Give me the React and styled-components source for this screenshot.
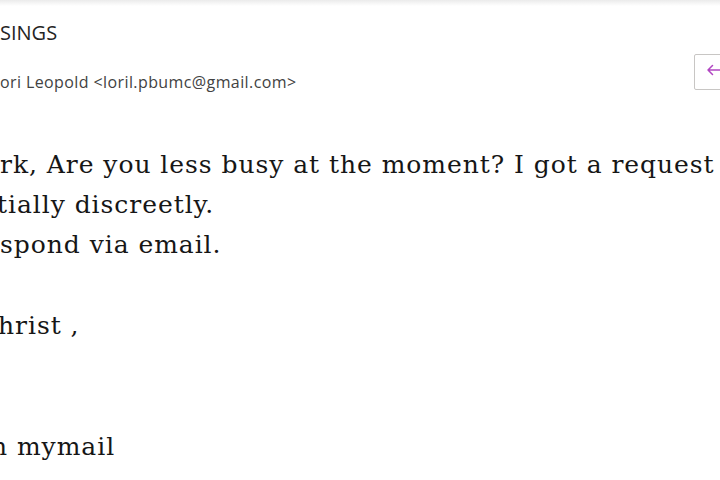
import React from "react";
import styled, { createGlobalStyle } from "styled-components";

const Global = createGlobalStyle`
  html, body { margin: 0; padding: 0; background: #ffffff; }
  body { width: 720px; height: 480px; overflow: hidden; }
`;

const Page = styled.div`
  width: 720px;
  height: 480px;
  overflow: hidden;
  display: flex;
  flex-direction: column;
  background: #ffffff;
`;

const TopShade = styled.div`
  height: 6px;
  flex: none;
  background: linear-gradient(to bottom, #ebebeb 0%, #f5f5f5 50%, #ffffff 100%);
`;

const Header = styled.div`
  display: flex;
  justify-content: space-between;
  align-items: flex-start;
  overflow: hidden;
`;

const HeaderText = styled.div`
  display: flex;
  flex-direction: column;
  font-family: "Open Sans", "Noto Sans", sans-serif;
`;

const Subject = styled.div`
  font-size: 20px;
  line-height: 26px;
  color: #242424;
  margin-top: 14px;
  white-space: nowrap;
`;

const Sender = styled.div`
  font-size: 16px;
  line-height: 20px;
  letter-spacing: 0.4px;
  color: #424242;
  margin-top: 25.6px;
  white-space: nowrap;
`;

const Actions = styled.div`
  display: flex;
  margin-top: 48px;
  margin-right: -80px;
  flex: none;
`;

const ActionButton = styled.button`
  width: 106px;
  height: 36px;
  border: 1px solid #c8c6c4;
  border-radius: 2px;
  background: #ffffff;
  display: flex;
  align-items: flex-start;
  padding: 8px 0 0 11px;
`;

const Body = styled.div`
  margin-top: 53px;
  font-family: "DejaVu Serif", serif;
  font-size: 25px;
  line-height: 40.4px;
  letter-spacing: 0.95px;
  color: #161616;
  overflow: hidden;
`;

const Line = styled.div`
  white-space: nowrap;
  min-height: 40.4px;
  text-indent: ${(p) => -(p.$nudge || 0)}px;
`;

const ReplyIcon = () => (
  <svg width="16" height="14" viewBox="0 0 16 14" fill="none">
    <path d="M16 7H2M6.5 2.5L2 7l4.5 4.5" stroke="#b146c2" strokeWidth="1.5" strokeLinecap="round" strokeLinejoin="round" />
  </svg>
);

export default function App() {
  return (
    <Page>
      <Global />
      <TopShade />
      <Header>
        <HeaderText>
          <Subject>SINGS</Subject>
          <Sender>ori Leopold &lt;loril.pbumc@gmail.com&gt;</Sender>
        </HeaderText>
        <Actions>
          <ActionButton aria-label="Reply"><ReplyIcon /></ActionButton>
        </Actions>
      </Header>
      <Body>
        <Line>rk, Are you less busy at the moment? I got a request</Line>
        <Line $nudge={3}>tially discreetly.</Line>
        <Line>spond via email.</Line>
        <Line />
        <Line $nudge={2}>hrist ,</Line>
        <Line />
        <Line />
        <Line $nudge={9}>n mymail</Line>
      </Body>
    </Page>
  );
}
